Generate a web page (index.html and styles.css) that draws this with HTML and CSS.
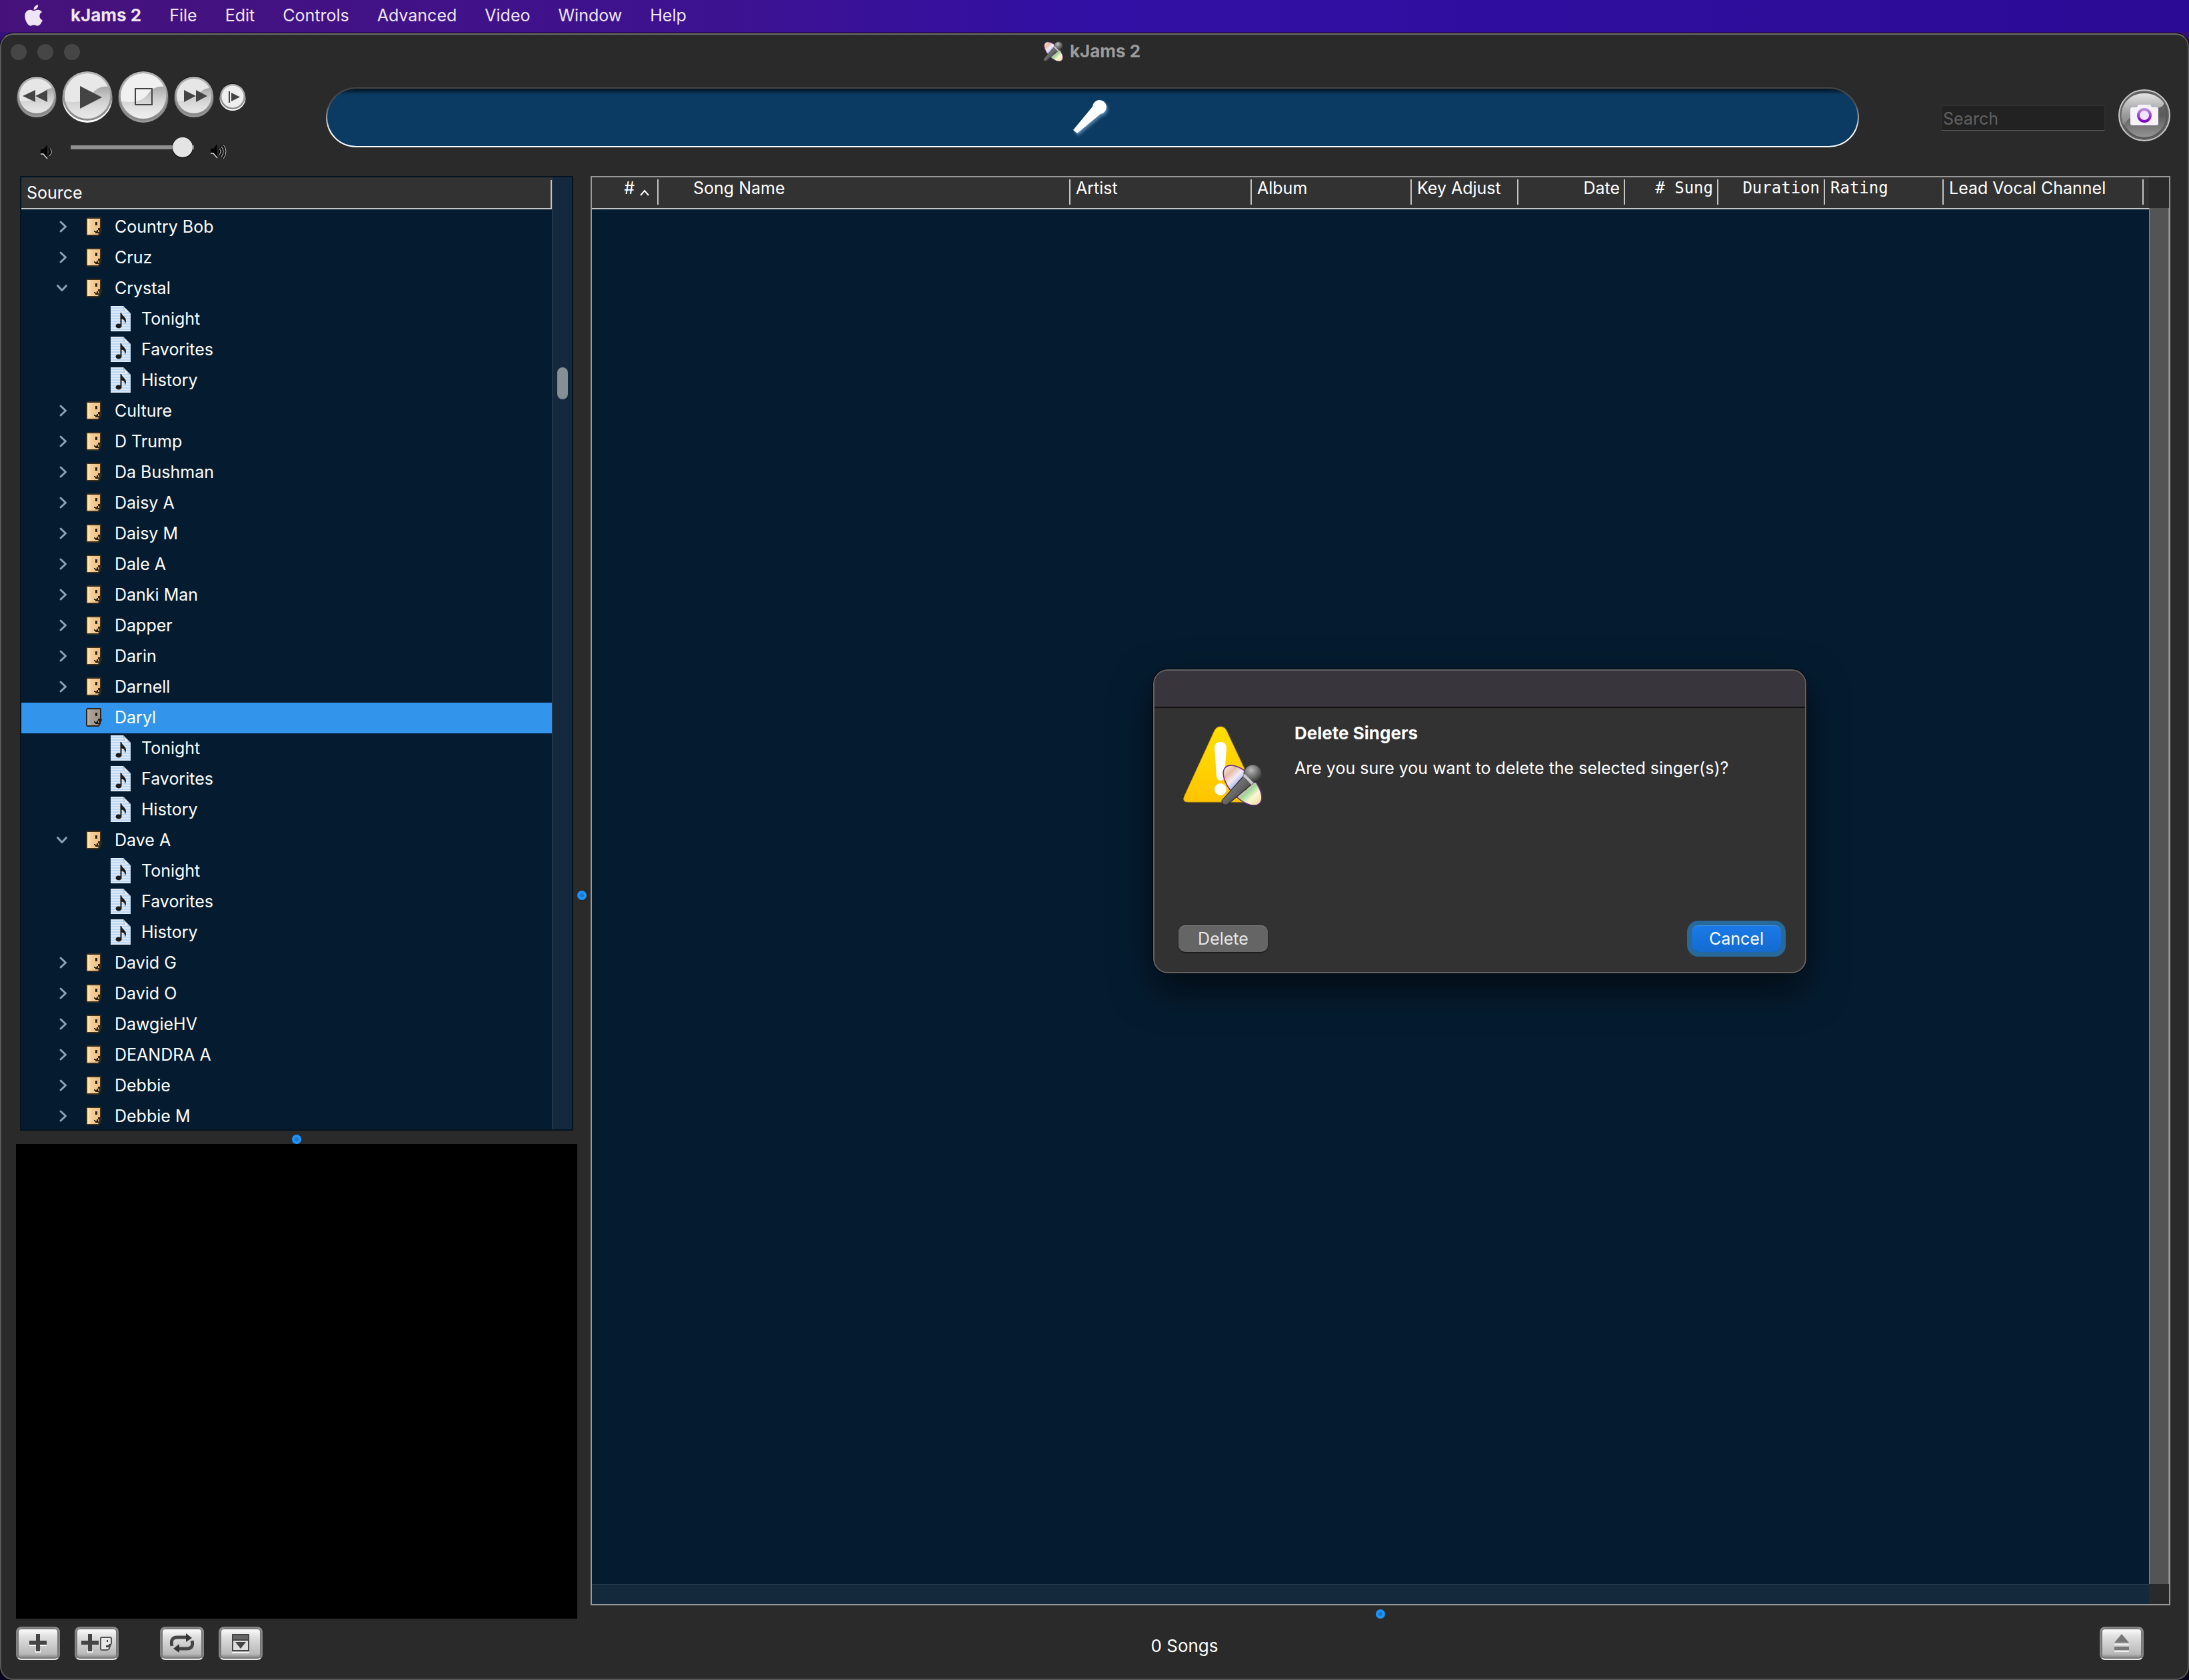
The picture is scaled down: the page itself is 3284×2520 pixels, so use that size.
FILE: index.html
```html
<!DOCTYPE html>
<html lang="en">
<head>
<meta charset="utf-8">
<title>kJams 2</title>
<link rel="stylesheet" href="styles.css">
</head>
<body>
<svg class="defs" aria-hidden="true">
  <defs>
    <linearGradient id="rim-white" x1="0" y1="0" x2="0" y2="1"><stop offset="0" stop-color="#0a0a0a"/><stop offset=".45" stop-color="#333"/><stop offset=".7" stop-color="#fff"/><stop offset="1" stop-color="#fff"/></linearGradient>
    <linearGradient id="rim-grey" x1="0" y1="0" x2="0" y2="1"><stop offset="0" stop-color="#0a0a0a"/><stop offset=".45" stop-color="#333"/><stop offset=".7" stop-color="#888"/><stop offset="1" stop-color="#999"/></linearGradient>
    <linearGradient id="ring" x1="0" y1="0" x2="0" y2="1"><stop offset="0" stop-color="#b4b4b4"/><stop offset="1" stop-color="#858585"/></linearGradient>
    <linearGradient id="gloss" x1="0" y1="0" x2="0" y2="1"><stop offset="0" stop-color="#999" stop-opacity=".85"/><stop offset="1" stop-color="#ddd" stop-opacity=".1"/></linearGradient>
    <linearGradient id="disc" x1="0" y1="0" x2="1" y2="0"><stop offset="0" stop-color="#f6ead2"/><stop offset=".14" stop-color="#e6b9a8"/><stop offset=".28" stop-color="#f3ecf4"/><stop offset=".42" stop-color="#a9b2f2"/><stop offset=".56" stop-color="#e6a6cf"/><stop offset=".68" stop-color="#9fdc98"/><stop offset=".82" stop-color="#fdf6d0"/><stop offset="1" stop-color="#eddfa8"/></linearGradient>
    <linearGradient id="mic-body" x1="0" y1="0" x2="1" y2="1"><stop offset="0" stop-color="#9a9a9a"/><stop offset=".5" stop-color="#666"/><stop offset="1" stop-color="#222"/></linearGradient>
    <radialGradient id="mic-head" cx=".4" cy=".3" r=".7"><stop offset="0" stop-color="#bbb"/><stop offset=".5" stop-color="#777"/><stop offset="1" stop-color="#333"/></radialGradient>
    <linearGradient id="warn" x1="0" y1="0" x2="0" y2="1"><stop offset="0" stop-color="#ffe000"/><stop offset="1" stop-color="#ffc400"/></linearGradient>
    <linearGradient id="face" x1="0" y1="0" x2="1" y2="0"><stop offset="0" stop-color="#fff0b8"/><stop offset=".3" stop-color="#f6cf9a"/><stop offset="1" stop-color="#eebf85"/></linearGradient>
    <linearGradient id="cam" x1="0" y1="0" x2="0" y2="1"><stop offset="0" stop-color="#6e6e6e"/><stop offset=".5" stop-color="#5c5c5c"/><stop offset="1" stop-color="#969696"/></linearGradient>
    <linearGradient id="cam-gloss" x1="0" y1="0" x2="0" y2="1"><stop offset="0" stop-color="#e4e4e4"/><stop offset="1" stop-color="#9a9a9a" stop-opacity=".6"/></linearGradient>
    <linearGradient id="lens" x1="0" y1="0" x2="0" y2="1"><stop offset="0" stop-color="#b98ae0"/><stop offset="1" stop-color="#7a00c4"/></linearGradient>
    <pattern id="paper" width="4" height="4" patternUnits="userSpaceOnUse"><rect width="4" height="4" fill="#e0ebf8"/><rect width="4" height="2" y="2" fill="#bcd6f1"/></pattern>
  </defs>
  <symbol id="i-app" viewBox="0 0 60 60">
    <ellipse cx="31" cy="31" rx="36" ry="18" transform="rotate(47 31 31)" fill="url(#disc)" stroke="#6d2d84" stroke-width="1.500"/>
    <ellipse cx="31" cy="31" rx="9" ry="5" transform="rotate(47 31 31)" fill="#8d8a66"/>
    <path d="M1 53 33 17 46 28 9 59Q1 61 1 53Z" fill="url(#mic-body)" stroke="#222"/>
    <circle cx="46" cy="14" r="13" fill="url(#mic-head)" stroke="#333"/>
    <path d="M34 14 47 27 44 30 32 18Z" fill="#c9c9c9"/>
  </symbol>
  <symbol id="i-right" viewBox="0 0 24 24"><path d="m9 5 7.500 7L9 19" fill="none" stroke="#8fa3b5" stroke-width="3" stroke-linecap="round" stroke-linejoin="round"/></symbol>
  <symbol id="i-down" viewBox="0 0 24 24"><path d="m4.500 8.500 6.500 7 6.500-7" fill="none" stroke="#8fa3b5" stroke-width="3" stroke-linecap="round" stroke-linejoin="round"/></symbol>
  <symbol id="i-face" viewBox="0 0 26 28">
    <path d="M3 0h20l1 2v14l1 2-2 4v2l-3 4H3l-2-2V2Z" fill="#3a2f1c"/>
    <path d="M3 2h19v13l-2 5 1 2-2 4H3Z" fill="url(#face)"/>
    <path d="M15 7h3v5h-3zM24 16v3h-5v3h2v2h-6v-2h-2v-2h2v1h2v-2h2v-3z" fill="#2c2416"/>
  </symbol>
  <symbol id="i-note" viewBox="0 0 30 38">
    <path d="M0 0h19L30 11v27H0Z" fill="url(#paper)"/>
    <path d="M19 0 30 11 20 8Z" fill="#8fa6c4"/><path d="m20 2 8 8-7-2Z" fill="#f2f7fd"/>
    <path d="M14.500 10h1.500c1 5 7 6 7 12 0 2-1 4-1.500 5 .5-5-2-7-5-7.500V30a4.500 3.500 0 1 1-2-3Z" fill="#1b1b1b"/>
  </symbol>
</svg>

<nav class="menubar" aria-label="Menu bar">
  <a class="menu apple" href="#" aria-label="Apple"><svg width="28" height="36" viewBox="0 0 384 512" preserveAspectRatio="xMaxYMid"><path fill="#eee6f4" d="M318.700 268.700c-.2-36.700 16.400-64.400 50-84.800-18.800-26.900-47.200-41.700-84.700-44.600-35.500-2.800-74.300 20.700-88.500 20.700-15 0-49.400-19.700-76.400-19.700C63.300 141.200 4 184.800 4 273.500q0 39.300 14.400 81.200c12.800 36.700 59 126.700 107.200 125.200 25.200-.6 43-17.900 75.800-17.900 31.800 0 48.300 17.900 76.400 17.900 48.600-.7 90.400-82.500 102.600-119.300-65.200-30.700-61.700-90-61.700-91.900zm-56.600-164.200c27.300-32.400 24.800-61.900 24-72.500-24.100 1.400-52 16.400-67.900 34.900-17.500 19.800-27.800 44.300-25.600 71.900 26.100 2 49.900-11.400 69.500-34.300z"/></svg></a>
  <a class="menu menu-app" href="#">kJams 2</a>
  <a class="menu" href="#">File</a>
  <a class="menu" href="#">Edit</a>
  <a class="menu" href="#">Controls</a>
  <a class="menu" href="#">Advanced</a>
  <a class="menu" href="#">Video</a>
  <a class="menu" href="#">Window</a>
  <a class="menu" href="#">Help</a>
</nav>

<div class="window">
  <header class="titlebar">
    <div class="lights"><span class="light"></span><span class="light"></span><span class="light"></span></div>
    <h1 class="title"><svg width="30" height="30"><use href="#i-app"/></svg>kJams 2</h1>
  </header>

  <section class="toolbar">
    <div class="player">
      <div class="transport">
        <button class="bare" aria-label="Rewind"><svg width="60" height="62" viewBox="0 0 60 62"><ellipse cx="30" cy="31" rx="30" ry="31" fill="url(#rim-grey)"/><circle cx="30" cy="30" r="29" fill="url(#ring)"/><circle cx="30" cy="30" r="26" fill="#e6e6e6"/><path d="M5 38Q28 38 36 28T54 18Q60 32 52 44 40 58 24 55 8 50 5 38Z" fill="url(#gloss)"/><path d="M9 30 28 21V39ZM28 30 46 21V39Z" fill="#444"/></svg></button>
        <button class="bare" aria-label="Play"><svg width="76" height="78" viewBox="0 0 76 78"><ellipse cx="38" cy="39" rx="38" ry="39" fill="url(#rim-white)"/><circle cx="38" cy="38" r="37" fill="url(#ring)"/><circle cx="38" cy="38" r="34" fill="#e8e8e8"/><path d="M5 46Q34 50 44 36T69 24Q76 42 66 58 52 74 32 72 10 66 5 46Z" fill="url(#gloss)"/><path d="M27 23 60 40 27 57Z" fill="#444"/></svg></button>
        <button class="bare" aria-label="Stop"><svg width="76" height="78" viewBox="0 0 76 78"><ellipse cx="38" cy="39" rx="38" ry="39" fill="url(#rim-grey)"/><circle cx="38" cy="38" r="37" fill="url(#ring)"/><circle cx="38" cy="38" r="34" fill="#f0f0f0"/><path d="M5 46Q34 50 44 36T69 24Q76 42 66 58 52 74 32 72 10 66 5 46Z" fill="url(#gloss)"/><path d="M26 27h25v24H26Z" fill="none" stroke="#444" stroke-width="2"/></svg></button>
        <button class="bare" aria-label="Fast forward"><svg width="60" height="62" viewBox="0 0 60 62"><ellipse cx="30" cy="31" rx="30" ry="31" fill="url(#rim-grey)"/><circle cx="30" cy="30" r="29" fill="url(#ring)"/><circle cx="30" cy="30" r="26" fill="#e6e6e6"/><path d="M5 38Q28 38 36 28T54 18Q60 32 52 44 40 58 24 55 8 50 5 38Z" fill="url(#gloss)"/><path d="M15 21 33 30 15 39ZM33 21 50 30 33 39Z" fill="#444"/></svg></button>
        <button class="bare" aria-label="Step"><svg width="40" height="41" viewBox="0 0 40 41"><ellipse cx="20" cy="20.500" rx="20" ry="20.500" fill="url(#rim-white)"/><circle cx="20" cy="20" r="19" fill="url(#ring)"/><circle cx="20" cy="20" r="16.500" fill="#eee"/><path d="M14 12h2v17h-2ZM18 14 31 20.500 18 27Z" fill="#444"/></svg></button>
      </div>
      <div class="volume">
        <svg width="18" height="24" viewBox="0 0 18 24"><path d="M1 8h4l6-7v21l-6-7H1Z" fill="#050505"/><path d="M1 15h4l6 7" fill="none" stroke="#ddd" stroke-width="1.500"/><path d="M13 7q5 4 0 10" fill="none" stroke="#050505" stroke-width="2"/><path d="M15 7q5 5-1 11" fill="none" stroke="#ccc"/></svg>
        <input class="slider" type="range" min="0" max="100" value="99" aria-label="Volume">
        <svg width="26" height="26" viewBox="0 0 26 26"><path d="M1 9h4l6-7v21l-6-7H1Z" fill="#050505"/><path d="M1 16h4l6 7" fill="none" stroke="#ddd" stroke-width="1.500"/><path d="M13 8q4 5 0 10M16 5q6 8 0 16M19 2q8 11 0 22" fill="none" stroke="#050505" stroke-width="2"/><path d="M14 9q4 4 0 9M17 6q6 7 0 15M20 3q8 10 0 21" fill="none" stroke="#ccc"/></svg>
      </div>
    </div>
    <div class="lcd">
      <svg width="56" height="56" viewBox="0 0 56 56"><path d="M2 47 31 12A10.500 10.500 0 1 1 43 23L8 52Z" fill="#fff"/></svg>
    </div>
    <input class="search" type="search" placeholder="Search" aria-label="Search">
    <button class="bare" aria-label="Snapshot"><svg width="78" height="78" viewBox="0 0 78 78"><circle cx="39" cy="39" r="38" fill="#666" stroke="#c8c8c8" stroke-width="2"/><circle cx="39" cy="39" r="34" fill="url(#cam)" stroke="#555" stroke-width="2"/><path d="M8 54Q22 32 46 30T68 20A35 35 0 0 0 39 6 33 33 0 0 0 8 54Z" fill="url(#cam-gloss)"/><path d="M21 27h7l2-4h18l2 4h7q3 0 3 3v21q0 3-3 3H21q-3 0-3-3V30q0-3 3-3Z" fill="#f6f2fa"/><circle cx="39" cy="39" r="9" fill="#f0e6fb" stroke="url(#lens)" stroke-width="4"/></svg></button>
  </section>

  <main class="main">
    <div class="sidebar">
      <section class="source">
        <div class="source-list">
          <h2 class="source-head">Source</h2>
          <ul class="tree">
            <li class="row"><svg class="chev"><use href="#i-right"/></svg><svg class="face"><use href="#i-face"/></svg>Country Bob</li>
            <li class="row"><svg class="chev"><use href="#i-right"/></svg><svg class="face"><use href="#i-face"/></svg>Cruz</li>
            <li class="row"><svg class="chev"><use href="#i-down"/></svg><svg class="face"><use href="#i-face"/></svg>Crystal</li>
            <li class="row child"><svg class="note"><use href="#i-note"/></svg>Tonight</li>
            <li class="row child"><svg class="note"><use href="#i-note"/></svg>Favorites</li>
            <li class="row child"><svg class="note"><use href="#i-note"/></svg>History</li>
            <li class="row"><svg class="chev"><use href="#i-right"/></svg><svg class="face"><use href="#i-face"/></svg>Culture</li>
            <li class="row"><svg class="chev"><use href="#i-right"/></svg><svg class="face"><use href="#i-face"/></svg>D Trump</li>
            <li class="row"><svg class="chev"><use href="#i-right"/></svg><svg class="face"><use href="#i-face"/></svg>Da Bushman</li>
            <li class="row"><svg class="chev"><use href="#i-right"/></svg><svg class="face"><use href="#i-face"/></svg>Daisy A</li>
            <li class="row"><svg class="chev"><use href="#i-right"/></svg><svg class="face"><use href="#i-face"/></svg>Daisy M</li>
            <li class="row"><svg class="chev"><use href="#i-right"/></svg><svg class="face"><use href="#i-face"/></svg>Dale A</li>
            <li class="row"><svg class="chev"><use href="#i-right"/></svg><svg class="face"><use href="#i-face"/></svg>Danki Man</li>
            <li class="row"><svg class="chev"><use href="#i-right"/></svg><svg class="face"><use href="#i-face"/></svg>Dapper</li>
            <li class="row"><svg class="chev"><use href="#i-right"/></svg><svg class="face"><use href="#i-face"/></svg>Darin</li>
            <li class="row"><svg class="chev"><use href="#i-right"/></svg><svg class="face"><use href="#i-face"/></svg>Darnell</li>
            <li class="row selected"><svg class="chev"></svg><svg class="face"><use href="#i-face"/></svg>Daryl</li>
            <li class="row child"><svg class="note"><use href="#i-note"/></svg>Tonight</li>
            <li class="row child"><svg class="note"><use href="#i-note"/></svg>Favorites</li>
            <li class="row child"><svg class="note"><use href="#i-note"/></svg>History</li>
            <li class="row"><svg class="chev"><use href="#i-down"/></svg><svg class="face"><use href="#i-face"/></svg>Dave A</li>
            <li class="row child"><svg class="note"><use href="#i-note"/></svg>Tonight</li>
            <li class="row child"><svg class="note"><use href="#i-note"/></svg>Favorites</li>
            <li class="row child"><svg class="note"><use href="#i-note"/></svg>History</li>
            <li class="row"><svg class="chev"><use href="#i-right"/></svg><svg class="face"><use href="#i-face"/></svg>David G</li>
            <li class="row"><svg class="chev"><use href="#i-right"/></svg><svg class="face"><use href="#i-face"/></svg>David O</li>
            <li class="row"><svg class="chev"><use href="#i-right"/></svg><svg class="face"><use href="#i-face"/></svg>DawgieHV</li>
            <li class="row"><svg class="chev"><use href="#i-right"/></svg><svg class="face"><use href="#i-face"/></svg>DEANDRA A</li>
            <li class="row"><svg class="chev"><use href="#i-right"/></svg><svg class="face"><use href="#i-face"/></svg>Debbie</li>
            <li class="row"><svg class="chev"><use href="#i-right"/></svg><svg class="face"><use href="#i-face"/></svg>Debbie M</li>
          </ul>
        </div>
        <div class="source-track"><div class="source-thumb"></div></div>
      </section>
      <div class="split split-h"><span class="dot"></span></div>
      <div class="video"></div>
    </div>
    <div class="split split-v"><span class="dot"></span></div>
    <div class="content">
      <section class="songs">
        <div class="songs-view">
          <table class="song-table">
            <colgroup><col class="c-num"><col class="c-name"><col class="c-artist"><col class="c-album"><col class="c-key"><col class="c-key"><col class="c-sung"><col class="c-key"><col class="c-rating"><col class="c-lead"></colgroup>
            <thead>
              <tr>
                <th class="num"># <svg width="16" height="10" viewBox="0 0 16 10"><path d="m2 9 6-7 6 7" fill="none" stroke="#fff" stroke-width="2"/></svg></th>
                <th class="name">Song Name</th>
                <th>Artist</th>
                <th>Album</th>
                <th>Key Adjust</th>
                <th class="end">Date</th>
                <th class="end mono"># Sung</th>
                <th class="end mono">Duration</th>
                <th class="mono">Rating</th>
                <th class="lead">Lead Vocal Channel</th>
              </tr>
            </thead>
            <tbody></tbody>
          </table>
        </div>
        <div class="corner"></div>
        <div class="vtrack"></div>
        <div class="htrack"></div>
        <div class="corner"></div>
      </section>
      <div class="split split-h"><span class="dot"></span></div>
    </div>
  </main>

  <footer class="footer">
    <div class="group">
      <button class="tool" aria-label="New playlist"><svg width="56" height="40" viewBox="0 0 56 40"><path d="M15 20h26v5H15ZM24 31h8v4h-8Z" fill="#fff" opacity=".8"/><path d="M25 7h6v10h10v6H31v10h-6V23H15v-6h10Z" fill="#444"/></svg></button>
      <button class="tool" aria-label="New singer"><svg width="56" height="40" viewBox="0 0 56 40"><path d="M14 31h8v4h-8Z" fill="#fff" opacity=".8"/><path d="M15 7h6v10h10v6H21v10h-6V23H5v-6h10Z" fill="#444"/><path d="M36 12h12q2 0 2 2v7l-2 4-1 4-3 2h-8q-2 0-2-2V14q0-2 2-2Z" fill="#e8e8e8" stroke="#555" stroke-width="2"/><path d="M43 16h2v3h-2zM42 24h4v-2h3v3h-2v2h-5z" fill="#444"/></svg></button>
    </div>
    <div class="group">
      <button class="tool" aria-label="Repeat"><svg width="56" height="40" viewBox="0 0 56 40"><path d="M13 25q-3-13 8-13h14M43 17q3 12-8 12H22" fill="none" stroke="#444" stroke-width="5"/><path d="M34 6 43 13 34 19ZM24 22 15 29 24 35Z" fill="#333"/></svg></button>
      <button class="tool" aria-label="Show video"><svg width="56" height="40" viewBox="0 0 56 40"><path d="M15 34h26v1.500H15Z" fill="#fff"/><path d="M16 8h24v24H16Z" fill="#ddd" stroke="#444" stroke-width="2"/><path d="M16 8h24v8H16Z" fill="#666" stroke="#444" stroke-width="2"/><path d="M20 19h16L28 29Z" fill="#444"/></svg></button>
    </div>
    <p class="status">0 Songs</p>
    <button class="tool" aria-label="Eject"><svg width="56" height="40" viewBox="0 0 56 40"><path d="M17 22h22v2H17ZM17 32h22v2H17Z" fill="#eee"/><path d="M28 7 39 20H17ZM17 26h22v5H17Z" fill="#777"/></svg></button>
  </footer>
</div>

<div class="dialog" role="alertdialog" aria-labelledby="dlg-title" aria-describedby="dlg-msg">
  <div class="dialog-bar"></div>
  <div class="dialog-body">
    <svg width="120" height="122" viewBox="0 0 120 122"><path d="M57 2q6 0 9 6l46 98q3 9-5 9H8q-9 0-5-9L48 8q3-6 9-6Z" fill="url(#warn)" stroke="#d9a400"/><path d="M57 25q9 0 9 9l-3 42q-1 7-6 7t-6-7l-3-42q0-9 9-9Z" fill="#fff"/><circle cx="57" cy="96" r="9" fill="#fff"/><use href="#i-app" x="58" y="58" width="62" height="62"/></svg>
    <div class="dialog-text">
      <h2 class="dialog-title" id="dlg-title">Delete Singers</h2>
      <p class="dialog-msg" id="dlg-msg">Are you sure you want to delete the selected singer(s)?</p>
    </div>
  </div>
  <div class="dialog-actions">
    <button class="push">Delete</button>
    <button class="push default">Cancel</button>
  </div>
</div>
</body>
</html>
```
FILE: styles.css
```css
* { box-sizing: border-box; }

body {
  margin: 0;
  height: 100vh;
  display: flex;
  flex-direction: column;
  gap: 2px;
  background: linear-gradient(#3a1080, #0a0420 30%);
  color: #fff;
  font: 25px/30px Inter, "Liberation Sans", sans-serif;
}

h1, h2, p, ul { margin: 0; padding: 0; font-size: inherit; }
svg { display: block; flex: none; }
.defs { position: absolute; width: 0; height: 0; }
button, input { font: inherit; color: inherit; }

.menubar {
  flex: none;
  height: 48px;
  padding: 0 36px 2px;
  display: flex;
  align-items: center;
  gap: 42px;
  background: linear-gradient(90deg, #46127a, #3d1291 33%, #3210a5 50%, #2b0b95);
}
.menu { color: #eee6f4; text-decoration: none; }
.menu-app { font-size: 26px; font-weight: 700; }

.window {
  flex: 1;
  min-height: 0;
  display: flex;
  flex-direction: column;
  border: 2px solid #585858;
  border-top-color: #707070;
  border-radius: 20px;
  box-shadow: 0 0 0 1px #000;
  background: #2a2a2a;
  overflow: hidden;
}

.titlebar {
  flex: none;
  height: 52px;
  padding: 0 14px;
  display: grid;
  grid-template-columns: 1fr auto 1fr;
  align-items: center;
}
.lights { display: flex; gap: 16px; }
.light { width: 24px; height: 24px; border-radius: 50%; background: #464646; }
.title { display: flex; align-items: center; gap: 10px; padding: 0 8px 2px 0; color: #9b9b9b; font-size: 26px; font-weight: 700; }

.toolbar {
  flex: none;
  padding: 0 26px 22px 22px;
  display: grid;
  grid-template-columns: 465px 1fr 123px 246px 20px 78px;
  align-items: center;
}
.player { grid-column: 1; padding: 2px 0 2px 1px; }
.transport { display: flex; align-items: center; gap: 8px; }
.bare { display: block; padding: 0; border: 0; background: none; }
.volume { display: flex; align-items: flex-end; height: 34px; margin-top: 22px; padding-left: 35px; }
.slider {
  align-self: flex-start;
  width: 185px;
  height: 30px;
  margin: 0 24px 0 28px;
  appearance: none;
  background: linear-gradient(#8f8f8f, #8f8f8f) center / 100% 6px no-repeat;
}
.slider::-webkit-slider-thumb {
  appearance: none;
  width: 30px;
  height: 30px;
  border-radius: 50%;
  background: #e4e4e4;
  box-shadow: 0 1px 2px #000;
}
.lcd {
  grid-column: 2;
  height: 90px;
  margin-top: 6px;
  display: flex;
  align-items: center;
  justify-content: center;
  border: 2px solid transparent;
  border-radius: 45px;
  background:
    linear-gradient(#04121f, #0b3b63 9px) padding-box,
    linear-gradient(#444, #555 30%, #fff 75%) border-box;
}
.lcd svg { margin-right: 6px; filter: drop-shadow(2px 3px 2px rgb(140 180 215 / .6)); }
.search {
  grid-column: 4;
  width: 100%;
  height: 38px;
  margin: 8px 0 0;
  padding: 4px 2px 2px;
  border: 1px solid #303030;
  border-bottom: 1px solid #5c5c5c;
  background: #222;
  outline: 0;
}
.search::placeholder { color: #616161; opacity: 1; }
.toolbar > .bare { grid-column: 6; }

.main {
  flex: 1;
  min-height: 0;
  padding: 0 26px 0 22px;
  display: grid;
  grid-template-columns: 842px 20px 1fr;
}
.sidebar, .content { display: flex; flex-direction: column; min-height: 0; min-width: 0; }

.source {
  flex: 1;
  min-height: 0;
  margin: 0 6px;
  display: flex;
  border: 2px solid #03131f;
  background: #051c30;
}
.source-list { flex: 1; overflow: hidden; }
.source-head {
  height: 48px;
  padding-left: 8px;
  border-bottom: 2px solid #c4c4c4;
  background: linear-gradient(#c4c4c4, #c4c4c4) right 4px / 2px 42px no-repeat #323232;
  font-weight: 400;
  line-height: 46px;
}
.tree { padding-top: 4px; list-style: none; }
.row { height: 46px; display: flex; align-items: center; padding: 0 0 2px 50px; }
.child { padding-left: 134px; }
.selected { background: #3294ea; }
.chev { width: 24px; height: 24px; margin-right: 22px; }
.face { width: 26px; height: 28px; margin-right: 18px; }
.note { width: 30px; height: 38px; margin-right: 16px; }
.selected .face { filter: saturate(.35) brightness(.75); }
.source-track { width: 30px; border-left: 1px solid #2a3d50; background: #15293d; }
.source-thumb { width: 16px; height: 48px; margin: 285px auto 0; border-radius: 8px; background: #868e96; }

.split { flex: none; display: flex; }
.split-h { height: 20px; justify-content: center; align-items: flex-end; }
.split-v { align-items: center; padding-bottom: 6px; }
.dot { width: 14px; height: 14px; border: 4px solid #1e94fb; border-radius: 50%; background: #1878cc; }
.video { flex: none; aspect-ratio: 842 / 712; background: #000; }

.songs {
  flex: 1;
  min-height: 0;
  display: grid;
  grid-template: 46px 1fr 30px / 1fr 30px;
  border: 2px solid #999;
}
.songs-view { grid-row: 1 / 3; background: #051c30; }
.corner { background: #2a2a2a; }
.vtrack { grid-column: 2; background: #545454; border: 1px solid #858585; border-width: 0 1px; }
.htrack { grid-column: 1; background: #15293d; border-top: 1px solid #2a3d50; }
.song-table { width: 100%; border-spacing: 0; table-layout: fixed; }
.song-table th {
  height: 48px;
  padding: 1px 8px 0;
  border-bottom: 2px solid #c4c4c4;
  background: linear-gradient(#c4c4c4, #c4c4c4) right 3px / 2px 38px no-repeat #323232;
  font-weight: 400;
  text-align: left;
  vertical-align: top;
  white-space: nowrap;
}
.song-table .num { padding-right: 13px; text-align: right; }
.num svg { display: inline-block; vertical-align: -3px; }
.song-table .name { padding-left: 52px; }
.song-table .end { text-align: right; }
.song-table .lead { background-position: right 8px top 3px; }
.song-table .mono { font: 24px/30px "DejaVu Sans Mono", monospace; }
.c-num { width: 100px; }
.c-artist { width: 272px; }
.c-album { width: 240px; }
.c-key { width: 160px; }
.c-sung { width: 140px; }
.c-rating { width: 178px; }
.c-lead { width: 308px; }

.footer {
  flex: none;
  height: 90px;
  padding: 12px 66px 0 22px;
  display: flex;
  align-items: flex-start;
}
.group { display: flex; gap: 22px; margin-right: 62px; }
.group + .group { margin-right: 0; }
.tool {
  width: 66px;
  height: 50px;
  padding: 3px 3px 5px;
  display: flex;
  align-items: center;
  justify-content: center;
  border: 2px solid #858585;
  border-bottom-color: #e8e8e8;
  border-radius: 8px;
  background: linear-gradient(#fff, #dedede 30%, #b8b8b8 85%, #777);
  box-shadow: inset 0 0 0 2px #777;
}
.status { flex: 1; padding: 14px 0 0 10px; font-size: 26px; text-align: center; }

.dialog {
  position: absolute;
  left: 1730px;
  top: 1004px;
  width: 980px;
  height: 456px;
  display: flex;
  flex-direction: column;
  border: 2px solid #626164;
  border-radius: 22px;
  background: #323232;
  box-shadow: 0 0 0 1px #000, 0 24px 60px rgb(0 0 0 / .6);
  overflow: hidden;
}
.dialog-bar { flex: none; height: 56px; border-bottom: 2px solid #111; background: #39353d; }
.dialog-body { flex: 1; display: flex; gap: 48px; padding: 12px 40px 0 42px; }
.dialog-body > svg { margin-top: 14px; }
.dialog-title, .dialog-msg { line-height: 52px; }
.dialog-title { font-size: 26px; }
.dialog-actions { display: flex; justify-content: space-between; padding: 0 36px 30px; }
.push {
  width: 134px;
  height: 40px;
  padding: 0;
  border: 0;
  border-radius: 10px;
  background: #656565;
  box-shadow: inset 0 1px #808080, 0 1px 2px #111;
  color: #e6e6e6;
}
.default {
  background: linear-gradient(#1a7ae8, #146bd0);
  box-shadow: inset 0 1px #3f98f2, 0 0 0 7px #26699a;
  color: #fff;
}
```
